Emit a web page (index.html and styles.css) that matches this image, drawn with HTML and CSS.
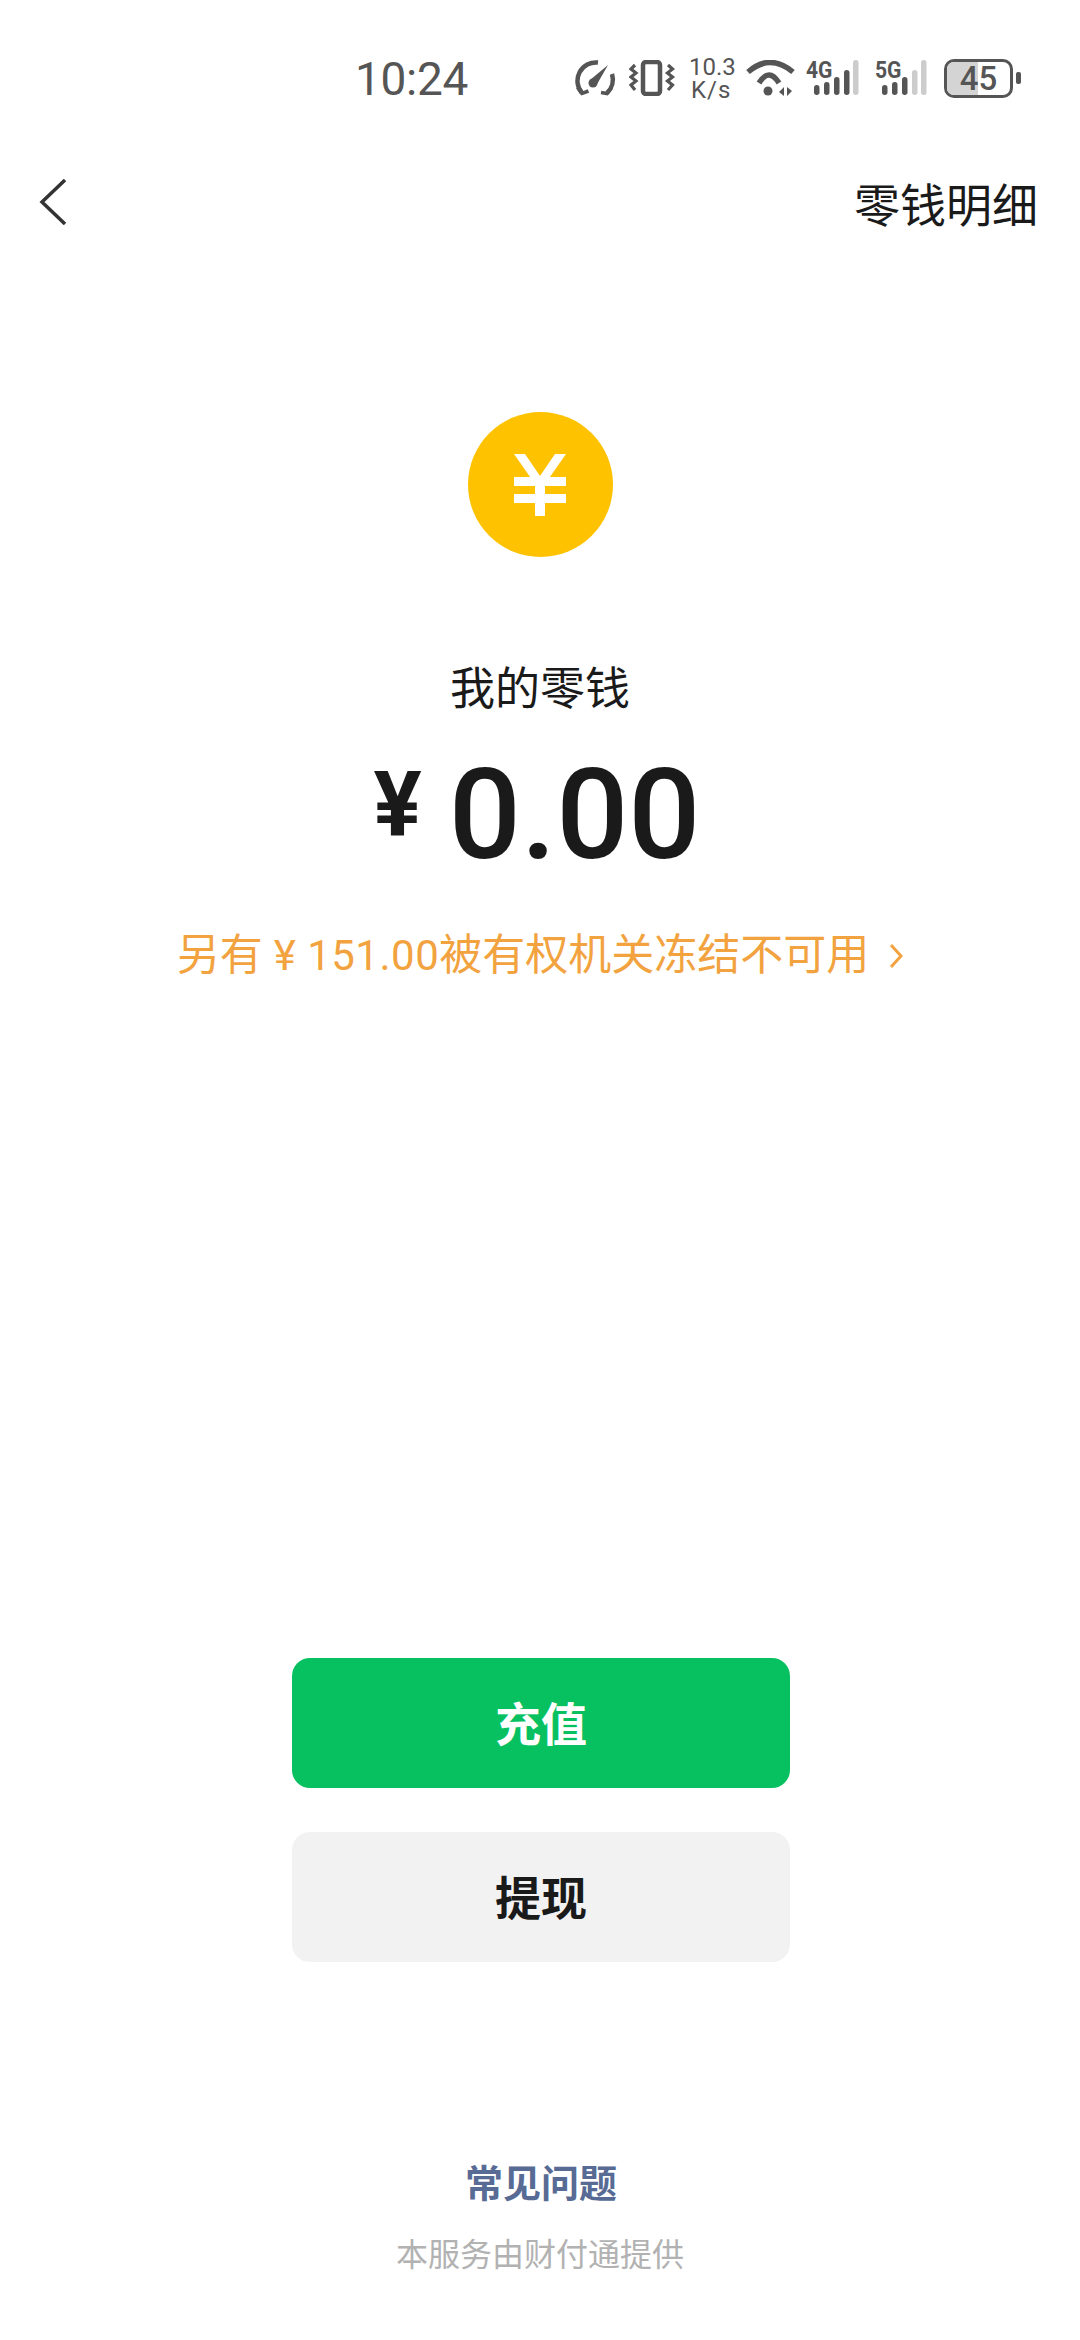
FILE: index.html
```html
<!DOCTYPE html>
<html lang="zh-CN">
  <head>
    <meta charset="UTF-8" />
    <title>我的零钱</title>
    <link rel="stylesheet" href="styles.css">
  </head>
  <body>
    <div class="page">
      <div class="status-bar">
        <span class="time">10:24</span>
        <div class="status-icons">
          <svg class="icon-gauge" width="55" height="36" viewBox="0 0 55 36" fill="none" stroke="#555" stroke-width="4.5">
            <path d="M8 33A18.5 18.5 0 0 1 24 2.5" />
            <path d="M38 14A18.5 18.5 0 0 1 33 33" />
            <path d="M3.5 27.5L8 33.5L14.5 31M27 32.5L33 33.5L37.5 27.5" stroke-width="3.5" />
            <path d="M16 20L34 5L22 26Z" fill="#555" stroke="none" />
            <circle cx="19" cy="23" r="4.500" fill="#555" stroke="none" />
          </svg>
          <svg class="icon-vibrate" width="60" height="36" viewBox="0 0 60 36" fill="none" stroke="#555">
            <rect x="14" y="2" width="17" height="32" rx="3" stroke-width="4.500" />
            <path d="M6 5L2 9L7 13L2 17L7 21L2 25L6 30M39 5L43.500 9L38.500 13L43.500 17L38.500 21L43.500 25L39 30" stroke-width="3.200" />
          </svg>
          <div class="speed"><div>10.3</div><div class="speed-unit">K/s</div></div>
          <svg class="icon-wifi" width="60" height="36" viewBox="0 0 60 36" fill="none" stroke="#555">
            <path d="M2 12Q24 -7 47 12" stroke-width="5.500" />
            <path d="M13 23Q23 7 33 23" stroke-width="5.500" />
            <circle cx="22" cy="31" r="4.500" fill="#555" stroke="none" />
            <path d="M38 27V36L33 32ZM41 27V36L46 31Z" fill="#555" stroke="none" />
          </svg>
          <div class="signal">
            <span class="signal-label">4G</span>
            <svg width="53" height="36" viewBox="0 0 53 36">
              <rect x="8" y="25" width="5.500" height="10" rx="2.700" fill="#555" />
              <rect x="18" y="22" width="5.500" height="13" rx="2.700" fill="#555" />
              <rect x="28" y="17" width="5.500" height="18" rx="2.700" fill="#555" />
              <rect x="38" y="10" width="5.500" height="25" rx="2.700" fill="#555" />
              <rect x="47" y="0" width="5.500" height="35" rx="2.700" fill="#ccc" />
            </svg>
          </div>
          <div class="signal">
            <span class="signal-label">5G</span>
            <svg width="53" height="36" viewBox="0 0 53 36">
              <rect x="7" y="25" width="5.500" height="10" rx="2.700" fill="#555" />
              <rect x="17" y="22" width="5.500" height="13" rx="2.700" fill="#555" />
              <rect x="27" y="17" width="5.500" height="18" rx="2.700" fill="#555" />
              <rect x="37" y="10" width="5.500" height="25" rx="2.700" fill="#ccc" />
              <rect x="46" y="0" width="5.500" height="35" rx="2.700" fill="#ccc" />
            </svg>
          </div>
          <div class="battery">
            <div class="battery-body"><span class="battery-level"></span><span class="battery-text">45</span></div>
            <span class="battery-nub"></span>
          </div>
        </div>
      </div>

      <div class="nav-bar">
        <svg width="28" height="46" viewBox="0 0 28 46" fill="none" stroke="#333" stroke-width="3.500">
          <path d="M26 1L3 23L26 45" />
        </svg>
        <span class="nav-link">零钱明细</span>
      </div>

      <div class="coin">
        <svg width="52" height="62" viewBox="0 0 52 62" fill="#fff">
          <path d="M0 0H11L26 22L41 0H52L31 30H21Z" />
          <rect x="0" y="23" width="52" height="9" />
          <rect x="0" y="40" width="52" height="9" />
          <rect x="21" y="25" width="10" height="37" />
        </svg>
      </div>

      <div class="balance-title">我的零钱</div>
      <div class="balance"><span class="currency">¥</span><span class="amount">0.00</span></div>
      <div class="frozen">
        <span>另有<span class="frozen-num"> ¥ 151.00</span>被有权机关冻结不可用</span>
        <svg width="14" height="26" viewBox="0 0 14 26" fill="none" stroke="#f2a33f" stroke-width="3">
          <path d="M2 2L12 13L2 24" />
        </svg>
      </div>

      <div class="actions">
        <button class="btn btn-green">充值</button>
        <button class="btn btn-gray">提现</button>
      </div>

      <div class="faq">常见问题</div>
      <div class="provider">本服务由财付通提供</div>
    </div>
  </body>
</html>
```

FILE: styles.css
```css
body {
  margin: 0;
  background: #fff;
  font-family: "Roboto", "Noto Sans CJK SC", sans-serif;
  color: #1a1a1a;
}
.page {
  height: 2340px;
  display: flex;
  flex-direction: column;
  align-items: center;
  overflow: hidden;
}

/* status bar */
.status-bar {
  box-sizing: border-box;
  width: 100%;
  height: 160px;
  padding: 58px 59px 0 355px;
  display: flex;
  align-items: flex-start;
  justify-content: space-between;
  color: #555;
}
.time {
  margin-top: 1px;
  font-size: 46px;
  line-height: 40px;
  letter-spacing: -0.3px;
}
.status-icons {
  display: flex;
  align-items: center;
  height: 40px;
}
.status-icons svg {
  display: block;
  flex-shrink: 0;
}
.speed {
  width: 57px;
  margin-top: 2px;
  font-size: 24px;
  line-height: 23px;
  text-align: left;
}
.speed-unit {
  padding-left: 2px;
  letter-spacing: 1px;
}
.signal {
  position: relative;
  width: 69px;
  height: 36px;
}
.signal-label {
  position: absolute;
  top: 0;
  left: 0;
  font-size: 24px;
  line-height: 20px;
  font-weight: 700;
  transform: scaleX(0.88);
  transform-origin: left;
}
.battery {
  display: flex;
  align-items: center;
  gap: 3px;
}
.battery-body {
  position: relative;
  box-sizing: border-box;
  width: 69px;
  height: 39px;
  border: 3.5px solid #555;
  border-radius: 10px;
  overflow: hidden;
  display: flex;
  align-items: center;
  justify-content: center;
}
.battery-level {
  position: absolute;
  left: 0;
  top: 0;
  bottom: 0;
  width: 31px;
  background: #d4d4d4;
}
.battery-text {
  position: relative;
  font-size: 33px;
  font-weight: 500;
}
.battery-nub {
  width: 5px;
  height: 12px;
  border-radius: 2px;
  background: #555;
}

/* nav */
.nav-bar {
  box-sizing: border-box;
  width: 100%;
  height: 84px;
  padding: 0 42px 0 39px;
  display: flex;
  align-items: center;
  justify-content: space-between;
}
.nav-link {
  font-size: 46px;
  color: #1a1a1a;
}

/* balance */
.coin {
  width: 145px;
  height: 145px;
  margin-top: 168px;
  border-radius: 50%;
  background: #fec200;
  display: flex;
  align-items: center;
  justify-content: center;
}
.balance-title {
  margin-top: 103px;
  font-size: 45px;
  line-height: 60px;
}
.balance {
  margin-top: 30px;
  margin-right: 6px;
  display: flex;
  align-items: flex-start;
  line-height: 130px;
  height: 130px;
}
.currency {
  margin-top: 6px;
  margin-right: 27px;
  font-size: 90px;
  font-weight: 700;
  line-height: 100px;
}
.amount {
  font-size: 127px;
  font-weight: 500;
}
.frozen {
  margin-top: 50px;
  display: flex;
  align-items: center;
  gap: 20px;
  font-size: 43px;
  line-height: 50px;
  color: #f2a33f;
}
.frozen-num {
  font-size: 42px;
  letter-spacing: 0.5px;
}

/* buttons */
.actions {
  margin-top: auto;
  margin-left: 2px;
  display: flex;
  flex-direction: column;
  gap: 44px;
}
.btn {
  width: 498px;
  height: 130px;
  padding: 0 0 4px;
  border: none;
  border-radius: 18px;
  font-family: inherit;
  font-size: 46px;
  font-weight: 700;
  cursor: pointer;
}
.btn-green {
  background: #07c160;
  color: #fff;
}
.btn-gray {
  background: #f2f2f2;
  color: #1a1a1a;
}

/* footer */
.faq {
  margin-top: 197px;
  margin-left: 2px;
  font-size: 38px;
  line-height: 50px;
  font-weight: 700;
  color: #576b95;
}
.provider {
  margin-top: 24px;
  margin-bottom: 63px;
  font-size: 32px;
  line-height: 44px;
  color: #b2b2b2;
}
```
